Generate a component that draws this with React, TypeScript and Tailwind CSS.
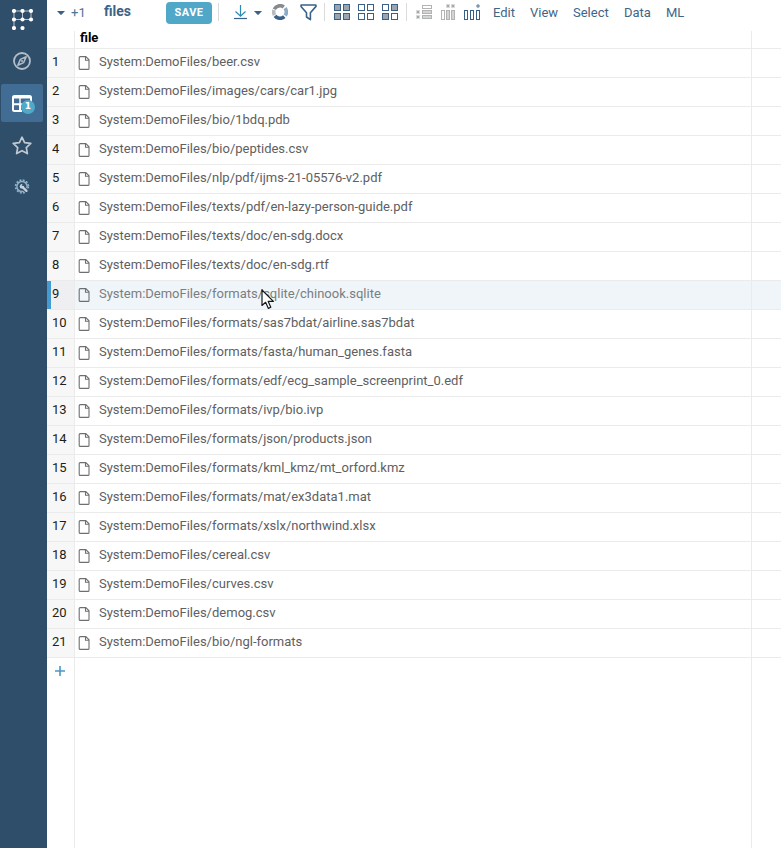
import React from 'react';

const files = [
  'beer.csv',
  'images/cars/car1.jpg',
  'bio/1bdq.pdb',
  'bio/peptides.csv',
  'nlp/pdf/ijms-21-05576-v2.pdf',
  'texts/pdf/en-lazy-person-guide.pdf',
  'texts/doc/en-sdg.docx',
  'texts/doc/en-sdg.rtf',
  'formats/sqlite/chinook.sqlite',
  'formats/sas7bdat/airline.sas7bdat',
  'formats/fasta/human_genes.fasta',
  'formats/edf/ecg_sample_screenprint_0.edf',
  'formats/ivp/bio.ivp',
  'formats/json/products.json',
  'formats/kml_kmz/mt_orford.kmz',
  'formats/mat/ex3data1.mat',
  'formats/xslx/northwind.xlsx',
  'cereal.csv',
  'curves.csv',
  'demog.csv',
  'bio/ngl-formats',
];

function Logo() {
  const dots = [[2, 2], [10.5, 2], [19, 2], [2, 10.5], [10.5, 10.5], [19, 10.5], [2, 19], [10.5, 19]];
  return (
    <svg width="22" height="21" viewBox="0 0 22 21" className="block">
      <path d="M2 2H19V10.5H10.5V2M2 2V10.5H10.5M2 10.5V19" fill="none" stroke="#b9c5d1" strokeWidth="1" />
      {dots.map(([x, y]) => <circle key={`${x}-${y}`} cx={x} cy={y} r="2.1" fill="#fff" />)}
    </svg>
  );
}

function Compass() {
  return (
    <svg width="18" height="18" viewBox="0 0 18 18" className="block" fill="none" stroke="#b3bec9">
      <circle cx="9" cy="9" r="8" strokeWidth="1.8" />
      <path d="M13.2 4.8L10.6 10.6L4.8 13.2L7.4 7.4Z" strokeWidth="1.5" strokeLinejoin="round" />
      <circle cx="9" cy="9" r="1" fill="#b3bec9" stroke="none" />
    </svg>
  );
}

function TableIcon() {
  return (
    <svg width="20" height="17" viewBox="0 0 20 17" className="block" fill="none" stroke="#fff">
      <path d="M19 7V2.5Q19 1 17.5 1H2.5Q1 1 1 2.5V14.5Q1 16 2.5 16H10" strokeWidth="2" />
      <path d="M1 2.2H19" strokeWidth="2.6" />
      <path d="M1 9.2H11M8 9V16" strokeWidth="2" />
      <path d="M8 3V9" strokeWidth="1.4" />
    </svg>
  );
}

function Star() {
  return (
    <svg width="20" height="19" viewBox="0 0 20 19" className="block">
      <path d="M10 1.2L12.6 6.6L18.8 7.4L14.3 11.6L15.4 17.6L10 14.7L4.6 17.6L5.7 11.6L1.2 7.4L7.4 6.6Z" fill="none" stroke="#c1c9d1" strokeWidth="1.7" strokeLinejoin="round" />
    </svg>
  );
}

function GearWrench() {
  return (
    <svg width="16" height="16" viewBox="0 0 16 16" className="block" fill="none" stroke="#8fb0c8">
      <circle cx="8" cy="7.5" r="6.4" strokeWidth="1.7" strokeDasharray="1.95 1.4" />
      <circle cx="8" cy="7.5" r="5.1" strokeWidth="1.5" />
      <path d="M8.4 7.9L13 12.5" stroke="#2f4e69" strokeWidth="4" />
      <path d="M8.4 7.9L12.4 11.9" stroke="#c8d1d9" strokeWidth="2.2" strokeLinecap="round" />
      <path d="M8.6 4.9L7.7 6.4L8.4 7.3L10.2 6.8A2.7 2.7 0 0 1 6.3 9.3A2.7 2.7 0 0 1 8.6 4.9Z" fill="#c8d1d9" stroke="none" />
    </svg>
  );
}

function Caret() {
  return <svg width="8" height="4" viewBox="0 0 8 4" className="block"><path d="M0 0H8L4.5 3.8H3.5Z" fill="#3a6188" /></svg>;
}

function Download() {
  return (
    <svg width="13" height="15" viewBox="0 0 13 15" className="block" fill="none" strokeWidth="1.2">
      <path d="M6.5 0V11M1.5 6.5L6.5 11.2L11.5 6.5" stroke="#2c8ab5" />
      <path d="M0 13.5H13" stroke="#3a6188" />
    </svg>
  );
}

function Ring() {
  return (
    <svg width="16" height="16" viewBox="0 0 16 16" className="block" fill="none" strokeWidth="3.6">
      <path d="M2.3 5.3A6.3 6.3 0 0 1 11.8 3" stroke="#87898c" />
      <path d="M13 4.2A6.3 6.3 0 0 1 13.2 11.5" stroke="#8eabc5" />
      <path d="M12.3 12.6A6.3 6.3 0 0 1 3 11.9" stroke="#3a6188" />
      <path d="M2.5 11.1A6.3 6.3 0 0 1 2 6" stroke="#b6bbc0" />
    </svg>
  );
}

function Filter() {
  return (
    <svg width="17" height="17" viewBox="0 0 17 17" className="block">
      <path d="M1.1 1H15.9L16 2.4L10.4 8.8V15.7L6.5 13V8.8L1 2.4Z" fill="none" stroke="#3a6188" strokeWidth="1.6" strokeLinejoin="round" />
    </svg>
  );
}

function Tiles({ filled }: { filled: number[] }) {
  return (
    <svg width="16" height="16" viewBox="0 0 16 16" className="block" stroke="#3a5f86">
      {[0, 1, 2, 3].map((i) => (
        <rect key={i} x={(i % 2) * 9 + 0.5} y={Math.floor(i / 2) * 9 + 0.5} width="6" height="6" fill={filled.includes(i) ? '#9ca4ad' : '#fff'} />
      ))}
    </svg>
  );
}

function RowsIcon() {
  return (
    <svg width="16" height="14" viewBox="0 0 16 14" className="block" fill="#d3d5d4" stroke="#b1b4b3">
      <rect x="6.5" y=".5" width="9" height="3" fill="#fff" />
      <rect x="6.5" y="5.5" width="9" height="3" />
      <rect x="6.5" y="10.5" width="9" height="3" />
      <path d="M0 5H4V9H0ZM0 10H4V14H0Z" fill="#d9dbda" stroke="none" />
      <path d="M1 6H3V8H1ZM1 11H3V13H1Z" fill="#a5a8a7" stroke="none" />
    </svg>
  );
}

function ColsIcon() {
  return (
    <svg width="14" height="16" viewBox="0 0 14 16" className="block" fill="#d3d5d4" stroke="#b1b4b3">
      <rect x=".5" y="6.5" width="3" height="9" fill="#fff" />
      <rect x="5.5" y="6.5" width="3" height="9" />
      <rect x="10.5" y="6.5" width="3" height="9" />
      <path d="M5 0H9V4H5ZM10 0H14V4H10Z" fill="#d9dbda" stroke="none" />
      <path d="M6 1H8V3H6ZM11 1H13V3H11Z" fill="#a5a8a7" stroke="none" />
    </svg>
  );
}

function AddColIcon() {
  return (
    <svg width="17" height="16" viewBox="0 0 17 16" className="block" fill="#fff" stroke="#3a5f86">
      <rect x=".5" y="6.5" width="3" height="9" />
      <rect x="6.5" y="6.5" width="3" height="9" />
      <rect x="12.5" y="6.5" width="3" height="9" />
      <circle cx="14" cy="2" r="1.5" fill="#7e9ab5" stroke="#7e9ab5" strokeWidth=".6" />
    </svg>
  );
}

function FileIcon() {
  return (
    <svg width="13" height="14" viewBox="0 0 13 14" className="block" fill="none" stroke="#6d6f71" strokeWidth="1.1">
      <path d="M2.2 .6H7.8L11 3.8V12.4Q11 13.4 10 13.4H2.2Q1.2 13.4 1.2 12.4V1.6Q1.2 .6 2.2 .6Z" />
      <path d="M7.5 .8V4.3H11" />
    </svg>
  );
}

function Divider({ className }: { className: string }) {
  return <div className={`h-[18px] w-px bg-[#dadbdd] ${className}`} />;
}

export default function App() {
  return (
    <div className="flex h-[848px] w-[781px] overflow-hidden bg-white font-['Roboto','Liberation_Sans',sans-serif] text-[13px]">
      <aside className="flex w-[47px] shrink-0 flex-col bg-[#2f4e69]">
        <div className="ml-3 mt-[9px]"><Logo /></div>
        <div className="ml-[13px] mt-[22px]"><Compass /></div>
        <div className="relative ml-px mt-[14px] h-[38px] w-[42px] rounded-[2px] bg-[#416c93]">
          <div className="ml-[11px] pt-[11px]"><TableIcon /></div>
          <div className="absolute left-5 top-4 flex size-[14px] items-center justify-center rounded-full bg-[#50a9c9] font-['DejaVu_Sans',sans-serif] text-[9px] font-bold text-white">1</div>
        </div>
        <div className="ml-3 mt-[14px]"><Star /></div>
        <div className="ml-[14px] mt-6"><GearWrench /></div>
      </aside>
      <main className="flex min-w-0 flex-1 flex-col">
        <nav className="flex h-[25px] shrink-0 items-center whitespace-nowrap text-[#3f6587]">
          <div className="ml-[10px]"><Caret /></div>
          <span className="ml-[6px] w-[33px] text-[13px] leading-[25px] text-[#4c7697] -mt-px">+1</span>
          <span className="w-[62px] text-[14px] font-bold leading-[25px] -mt-0.5 text-[#3e6284]">files</span>
          <button className="flex h-[22px] w-[46px] items-center justify-center rounded-[4px] bg-[#50a7c8] pt-px text-[11px] font-bold tracking-[0.5px] text-white">SAVE</button>
          <Divider className="ml-[6px] -mt-px" />
          <div className="ml-[15px]"><Download /></div>
          <div className="ml-[7px]"><Caret /></div>
          <div className="ml-[10px] -mt-px"><Ring /></div>
          <div className="ml-3 -mt-px"><Filter /></div>
          <Divider className="ml-[7px] -mt-px" />
          <div className="ml-[9px] -mt-px"><Tiles filled={[0, 1, 2, 3]} /></div>
          <div className="ml-2 -mt-px"><Tiles filled={[]} /></div>
          <div className="ml-2 -mt-px"><Tiles filled={[1, 2]} /></div>
          <Divider className="ml-2 -mt-px" />
          <div className="ml-[9px] -mt-px"><RowsIcon /></div>
          <div className="ml-[9px] -mt-px"><ColsIcon /></div>
          <div className="ml-[9px] -mt-px"><AddColIcon /></div>
          <div className="ml-3 flex leading-[25px]">
            <span className="w-[37px]">Edit</span>
            <span className="w-[43px]">View</span>
            <span className="w-[51px]">Select</span>
            <span className="w-[42px]">Data</span>
            <span>ML</span>
          </div>
        </nav>
        <section className="mt-[6px] flex min-h-0 flex-1 flex-col">
          <div className="flex h-[18px] shrink-0 border-b border-[#ebebeb]">
            <div className="w-7 shrink-0 border-r border-[#ebebeb]" />
            <div className="w-[677px] shrink-0 border-r border-[#ebebeb] pl-[5px] font-bold leading-[14px] text-black">file</div>
          </div>
          {files.map((file, i) => (
            <div key={file} className={`flex h-[29px] shrink-0 border-b border-[#ebebeb] ${i === 8 ? 'bg-[#f0f5f9]' : ''}`}>
              <div className={`w-7 shrink-0 border-r border-[#ebebeb] leading-[25px] text-[#1c1e20] ${i === 8 ? 'border-l-4 border-l-[#459bd1] bg-[#efeff1] pl-px' : 'bg-[#f7f7f7] pl-[5px]'}`}>{i + 1}</div>
              <div className={`flex w-[677px] shrink-0 border-r border-[#ebebeb] pl-[3px] leading-[25px] ${i === 8 ? 'text-[#7b7e81]' : 'text-[#5e6062]'}`}>
                <div className="mr-2 mt-[7px]"><FileIcon /></div>
                <span>System:DemoFiles/{file}</span>
              </div>
            </div>
          ))}
          <div className="flex min-h-0 flex-1">
            <div className="w-7 shrink-0 border-r border-[#ebebeb] pl-2 pt-2">
              <svg width="11" height="11" viewBox="0 0 11 11" className="block"><path d="M5 0V10M0 5H10" stroke="#4b98c8" strokeWidth="1.6" /></svg>
            </div>
            <div className="w-[677px] shrink-0 border-r border-[#ebebeb]" />
          </div>
        </section>
      </main>
      <svg width="14" height="21" viewBox="0 0 14 21" className="absolute left-[261px] top-[289px]">
        <path d="M1 1V16.5L4.6 13.3L7.4 19.4L9.8 18.3L7.2 12.4H12.4Z" fill="#fff" stroke="#15181b" strokeWidth="1.2" strokeLinejoin="round" />
      </svg>
    </div>
  );
}
